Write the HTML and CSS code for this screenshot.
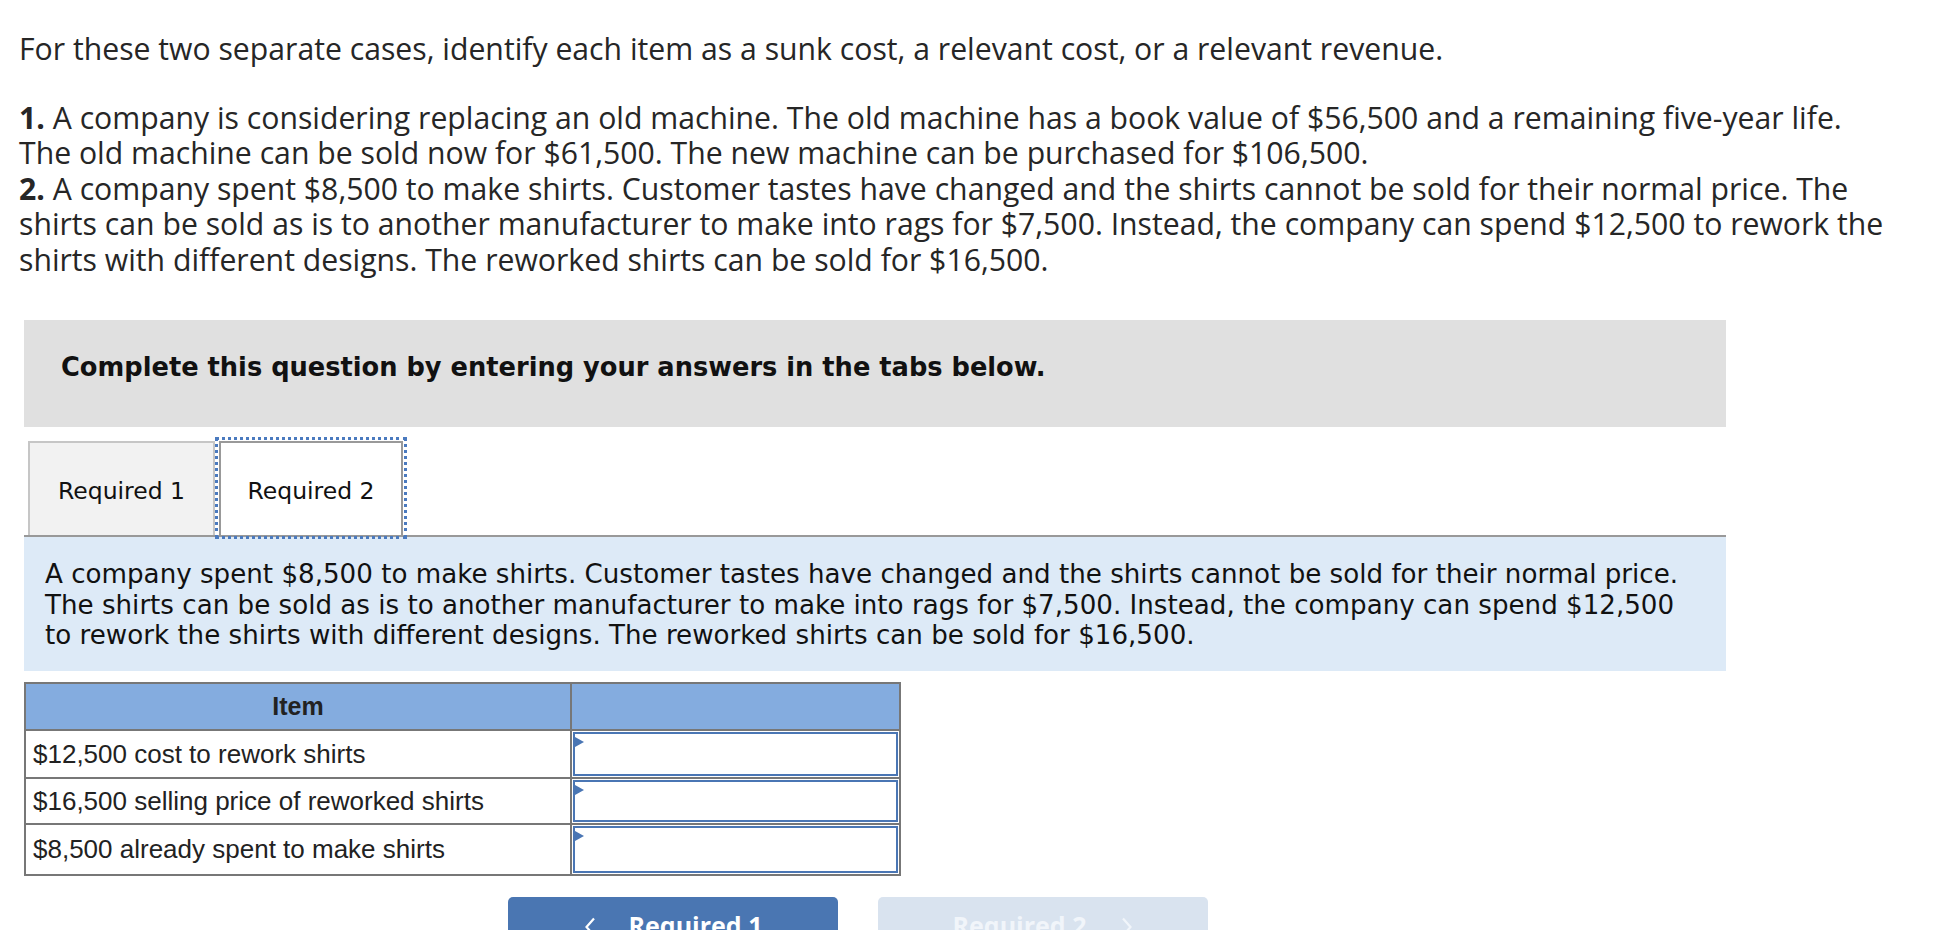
FILE: index.html
```html
<!DOCTYPE html>
<html>
<head>
<meta charset="utf-8">
<link rel="stylesheet" href="styles.css">
</head>
<body>
<div class="page">
  <p class="lead">For these two separate cases, identify each item as a sunk cost, a relevant cost, or a relevant revenue.</p>
  <p class="cases"><b>1.</b> A company is considering replacing an old machine. The old machine has a book value of $56,500 and a remaining five-year life.<br>The old machine can be sold now for $61,500. The new machine can be purchased for $106,500.<br><b>2.</b> A company spent $8,500 to make shirts. Customer tastes have changed and the shirts cannot be sold for their normal price. The<br>shirts can be sold as is to another manufacturer to make into rags for $7,500. Instead, the company can spend $12,500 to rework the<br>shirts with different designs. The reworked shirts can be sold for $16,500.</p>

  <div class="notice">Complete this question by entering your answers in the tabs below.</div>

  <div class="tabs">
    <div class="tab">Required 1</div>
    <div class="tab active">Required 2</div>
  </div>
  <div class="panel">A company spent $8,500 to make shirts. Customer tastes have changed and the shirts cannot be sold for their normal price.<br>The shirts can be sold as is to another manufacturer to make into rags for $7,500. Instead, the company can spend $12,500<br>to rework the shirts with different designs. The reworked shirts can be sold for $16,500.</div>

  <table class="grid">
    <tr class="hd"><th class="c1">Item</th><th class="c2"></th></tr>
    <tr class="r1"><td class="c1">$12,500 cost to rework shirts</td><td class="c2"><div class="sel"></div></td></tr>
    <tr class="r2"><td class="c1">$16,500 selling price of reworked shirts</td><td class="c2"><div class="sel"></div></td></tr>
    <tr class="r3"><td class="c1">$8,500 already spent to make shirts</td><td class="c2"><div class="sel"></div></td></tr>
  </table>

  <div class="nav">
    <div class="btn prev"><svg class="chev left" width="12" height="20" viewBox="0 0 12 20"><path d="M10 1.5 L2.5 10 L10 18.5" fill="none" stroke="currentColor" stroke-width="2.2"/></svg><span>Required 1</span></div>
    <div class="btn next disabled"><span>Required 2</span><svg class="chev right" width="12" height="20" viewBox="0 0 12 20"><path d="M2 1.5 L9.5 10 L2 18.5" fill="none" stroke="currentColor" stroke-width="2.2"/></svg></div>
  </div>
</div>
</body>
</html>
```

FILE: styles.css
```css
html, body { margin: 0; padding: 0; background: #fff; }
body { color: #262626; }
.page { padding: 31px 0 0 19px; width: 1900px; }
.lead, .cases { font-family: "Open Sans", sans-serif; font-size: 30.2px; line-height: 35.5px; margin: 0; white-space: nowrap; }
.cases { margin-top: 33px; }
.cases b { font-weight: 700; }
.notice { margin-top: 43px; margin-left: 5px; width: 1665px; box-sizing: content-box; background: #e0e0e0; height: 93px; padding: 0 0 14px 37px; display: flex; align-items: center; font-family: "DejaVu Sans", sans-serif; font-weight: bold; font-size: 25.7px; color: #111; }
.tabs { margin-left: 5px; width: 1698px; margin-top: 9px; display: flex; align-items: flex-end; border-bottom: 2px solid #999; padding-left: 4px; height: 99px; }
.tab { font-family: "DejaVu Sans", sans-serif; font-size: 23.5px; color: #111; height: 94px; box-sizing: border-box; display: flex; align-items: center; justify-content: center; padding-top: 4px; border: 2px solid #c6c6c6; border-bottom: none; background: #f2f2f2; width: 187px; }
.tab.active { background: #fff; border-color: #999; margin-left: 4px; width: 184px; outline: 3px dotted #4a7abf; outline-offset: 1px; }
.panel { margin-left: 5px; box-sizing: border-box; width: 1702px; background: #ddeaf7; font-family: "DejaVu Sans", sans-serif; font-size: 26.15px; line-height: 30.5px; padding: 22px 10px 20px 21px; color: #111; height: 134px; white-space: nowrap; }
.grid { margin-left: 5px; margin-top: 11px; border-collapse: collapse; table-layout: fixed; width: 871px; font-family: "Liberation Sans", Arial, sans-serif; font-size: 26px; color: #222; }
.grid th, .grid td { border: 2px solid #777; padding: 0; }
.grid th { background: #84acdf; font-weight: bold; font-size: 25px; }
.grid .hd { height: 47px; }
.grid .r1 { height: 48px; }
.grid .r2 { height: 46px; }
.grid .r3 { height: 51px; }
.grid .c1 { width: 544px; text-align: left; padding-left: 7px; }
.grid th.c1 { text-align: center; padding-left: 0; }
.grid .c2 { width: 327px; }
.sel { position: relative; min-height: 42px; border: 2px solid #4a76b4; margin: 1px; background: #fff; box-sizing: border-box; }
.grid .r1 .sel { min-height: 44px; }
.grid .r3 .sel { min-height: 47px; }
.sel::before { content: ""; position: absolute; left: 0; top: 3px; border-left: 9px solid #4a76b4; border-top: 5px solid transparent; border-bottom: 5px solid transparent; }
.nav { display: flex; gap: 40px; margin-left: 489px; margin-top: 21px; }
.btn { width: 330px; height: 60px; border-radius: 5px 5px 0 0; background: #4a76b2; color: #fff; font-family: "Open Sans", sans-serif; font-weight: bold; font-size: 25px; display: flex; justify-content: center; align-items: flex-start; padding-top: 11px; box-sizing: border-box; }
.btn.disabled { background: #d9e3ef; color: #f1f5fa; }
.chev { flex: none; margin-top: 9px; }
.chev.left { margin-right: 33px; }
.chev.right { margin-left: 35px; }
```
